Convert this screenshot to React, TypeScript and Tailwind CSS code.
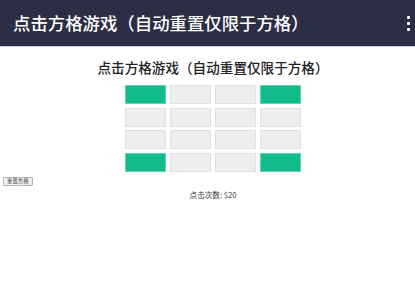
import React, { useState } from 'react';

const FONT = { fontFamily: '"Noto Sans CJK SC", "Noto Sans", sans-serif' };

const CORNERS = [0, 3, 12, 15];

export default function App() {
  const [count, setCount] = useState(20);
  const [active, setActive] = useState<number[]>(CORNERS);

  const toggle = (i: number) => {
    setCount((c) => c + 1);
    setActive((a) => (a.includes(i) ? a.filter((x) => x !== i) : [...a, i]));
  };

  return (
    <div className="w-[415px] h-[297px] bg-white text-[#222] overflow-hidden" style={FONT}>
      <header className="h-[47px] bg-[#2c2e45] border-b border-[#c9cbd6] flex items-center justify-between pl-[13px] pr-[4px]">
        <h1 className="text-[17.4px] leading-none font-medium text-white">
          点击方格游戏（自动重置仅限于方格）
        </h1>
        <div className="flex flex-col items-center gap-[3px] w-[6px]">
          <span className="w-[3px] h-[3px] bg-white rounded-[1px]" />
          <span className="w-[3px] h-[3px] bg-white rounded-[1px]" />
          <span className="w-[3px] h-[3px] bg-white rounded-[1px]" />
        </div>
      </header>

      <main className="pl-[11px] flex flex-col items-center pt-[12px]">
        <h2 className="text-[13.6px] leading-[16px] font-medium text-[#222]">
          点击方格游戏（自动重置仅限于方格）
        </h2>
        <div className="mt-[10px] grid grid-cols-4 gap-x-[4px] gap-y-[3.7px]">
          {Array.from({ length: 16 }, (_, i) => (
            <button
              key={i}
              onClick={() => toggle(i)}
              className={
                active.includes(i)
                  ? 'w-[41px] h-[19px] bg-[#12bb8c] border border-[#5fd4b0]'
                  : 'w-[41px] h-[19px] bg-[#eeeeee] border border-[#e0e0e0]'
              }
            />
          ))}
        </div>
      </main>

      <div className="pl-[3px] mt-[5px]">
        <button
          onClick={() => setActive(CORNERS)}
          className="h-[9px] px-[3px] bg-[#efefef] border border-[#b5b5b5] rounded-[1px] text-[5.4px] leading-none text-[#444] flex items-center"
        >
          重置方格
        </button>
      </div>

      <p className="pl-[11px] mt-[4px] text-center text-[7.6px] leading-[10px] text-[#333]">
        点击次数: ${count}
      </p>
    </div>
  );
}
